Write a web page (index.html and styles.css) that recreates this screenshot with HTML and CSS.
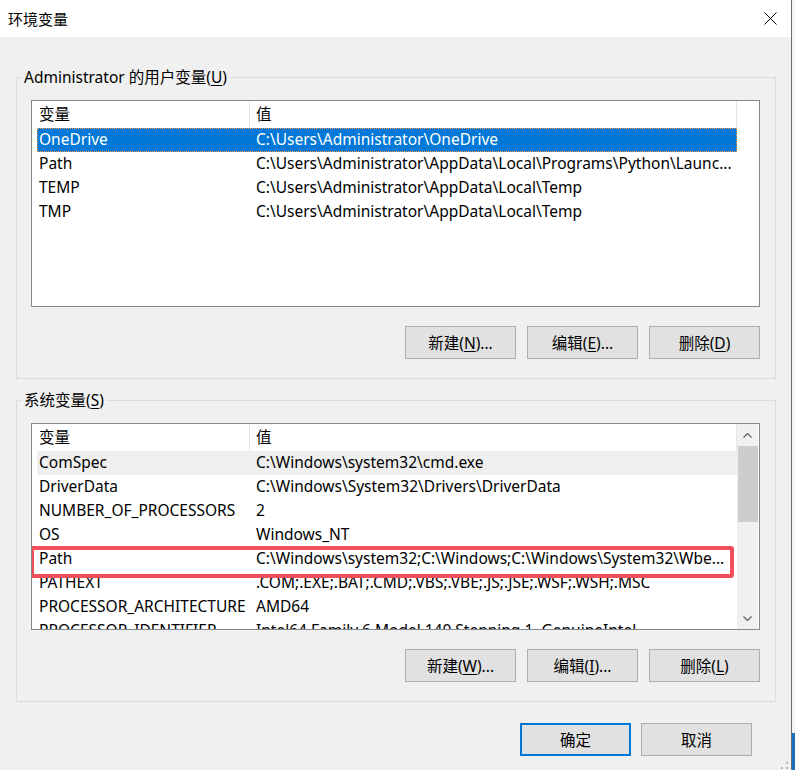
FILE: index.html
```html
<!DOCTYPE html>
<html lang="zh-CN">
<head>
<meta charset="utf-8">
<title>环境变量</title>
<link rel="stylesheet" href="styles.css">
</head>
<body>
<div class="window">
  <div class="titlebar">
    <span class="title">环境变量</span>
    <span class="close">
      <svg width="13" height="13" viewBox="0 0 13 13"><path d="M0.5 0.5 L12.5 12.5 M12.5 0.5 L0.5 12.5" stroke="#000" stroke-width="1" fill="none"/></svg>
    </span>
  </div>
  <div class="content">
    <fieldset class="group">
      <legend>Administrator 的用户变量(<u>U</u>)</legend>
      <div class="list">
        <div class="table">
          <div class="row head"><span class="name">变量</span><span class="val">值</span></div>
          <div class="row selected"><span class="name">OneDrive</span><span class="val">C:\Users\Administrator\OneDrive</span></div>
          <div class="row"><span class="name">Path</span><span class="val">C:\Users\Administrator\AppData\Local\Programs\Python\Launc...</span></div>
          <div class="row"><span class="name">TEMP</span><span class="val">C:\Users\Administrator\AppData\Local\Temp</span></div>
          <div class="row"><span class="name">TMP</span><span class="val">C:\Users\Administrator\AppData\Local\Temp</span></div>
        </div>
      </div>
      <div class="btns">
        <button class="btn">新建(<u>N</u>)...</button>
        <button class="btn">编辑(<u>E</u>)...</button>
        <button class="btn">删除(<u>D</u>)</button>
      </div>
    </fieldset>

    <fieldset class="group second">
      <legend>系统变量(<u>S</u>)</legend>
      <div class="list">
        <div class="table">
          <div class="row head"><span class="name">变量</span><span class="val">值</span></div>
          <div class="row hover"><span class="name">ComSpec</span><span class="val">C:\Windows\system32\cmd.exe</span></div>
          <div class="row"><span class="name">DriverData</span><span class="val">C:\Windows\System32\Drivers\DriverData</span></div>
          <div class="row"><span class="name">NUMBER_OF_PROCESSORS</span><span class="val">2</span></div>
          <div class="row"><span class="name">OS</span><span class="val">Windows_NT</span></div>
          <div class="row"><span class="name">Path</span><span class="val">C:\Windows\system32;C:\Windows;C:\Windows\System32\Wbe...</span></div>
          <div class="row"><span class="name">PATHEXT</span><span class="val">.COM;.EXE;.BAT;.CMD;.VBS;.VBE;.JS;.JSE;.WSF;.WSH;.MSC</span></div>
          <div class="row"><span class="name">PROCESSOR_ARCHITECTURE</span><span class="val">AMD64</span></div>
          <div class="row"><span class="name">PROCESSOR_IDENTIFIER</span><span class="val">Intel64 Family 6 Model 140 Stepping 1, GenuineIntel</span></div>
        </div>
        <div class="scrollbar">
          <span class="arrow">
            <svg width="9" height="5" viewBox="0 0 9 5"><polyline points="0.5,4.5 4.5,0.5 8.5,4.5" fill="none" stroke="#606060" stroke-width="1.2"/></svg>
          </span>
          <span class="thumb"></span>
          <span class="track"></span>
          <span class="arrow">
            <svg width="9" height="5" viewBox="0 0 9 5"><polyline points="0.5,0.5 4.5,4.5 8.5,0.5" fill="none" stroke="#606060" stroke-width="1.2"/></svg>
          </span>
        </div>
        <div class="mark"></div>
      </div>
      <div class="btns">
        <button class="btn">新建(<u>W</u>)...</button>
        <button class="btn">编辑(<u>I</u>)...</button>
        <button class="btn">删除(<u>L</u>)</button>
      </div>
    </fieldset>

    <div class="footer">
      <button class="btn default">确定</button>
      <button class="btn">取消</button>
    </div>
  </div>
  <svg class="grip" width="10" height="10" viewBox="0 0 10 10">
    <rect x="7" y="2" width="2" height="2" fill="#b8b8b8"/>
    <rect x="2" y="7" width="2" height="2" fill="#b8b8b8"/>
    <rect x="7" y="7" width="2" height="2" fill="#b8b8b8"/>
  </svg>
</div>
<div class="desktop"></div>
</body>
</html>
```

FILE: styles.css
```css
* {
  box-sizing: border-box;
}

body {
  margin: 0;
  background: #f3f3f3;
  font-family: "Noto Sans", "Noto Sans CJK SC", sans-serif;
  font-size: 15.5px;
  color: #000;
  display: flex;
}

.window {
  position: relative;
  width: 792px;
  height: 770px;
  background: #f0f0f0;
  border-right: 1px solid #6d6d6d;
  display: flex;
  flex-direction: column;
  flex-shrink: 0;
}

.desktop {
  flex: 1;
  height: 770px;
  background: linear-gradient(#f3f3f3 0, #f3f3f3 733px, #1a6fc0 733px);
}

.titlebar {
  height: 37px;
  background: #fff;
  display: flex;
  align-items: center;
  justify-content: space-between;
  padding-left: 8px;
}

.title {
  font-size: 15px;
  line-height: 20px;
}

.close {
  width: 42px;
  height: 37px;
  display: flex;
  align-items: center;
  justify-content: center;
}

.content {
  padding: 30px 15px 0 16px;
}

.group {
  margin: 0;
  padding: 13px 0 19px 0;
  border: 1px solid #dcdcdc;
  width: 760px;
  min-width: 0;
}

.group.second {
  margin-top: 11px;
}

.group legend {
  margin-left: 4px;
  padding: 0 3px;
  line-height: 20px;
}

u {
  text-decoration: underline;
  text-underline-offset: 2px;
}

.list {
  position: relative;
  height: 207px;
  margin: 0 15px 0 14px;
  border: 1px solid #828790;
  background: #fff;
  display: flex;
  overflow: hidden;
}

.table {
  flex: 1;
  padding-left: 5px;
  overflow: hidden;
}

.row {
  display: flex;
  width: 700px;
  height: 24px;
  line-height: 23px;
  white-space: nowrap;
}

.row .name {
  width: 213px;
  padding-left: 2px;
  overflow: hidden;
  flex-shrink: 0;
}

.row .val {
  width: 487px;
  padding-left: 6px;
  overflow: hidden;
  flex-shrink: 0;
}

.row.head {
  height: 27px;
  line-height: 27px;
}

.row.head .name,
.row.head .val {
  border-right: 1px solid #e5e5e5;
}

.row.selected {
  background: #0078d7;
  color: #fff;
  outline: 1px dotted #f59a4a;
  outline-offset: -1px;
}

.row.hover {
  background: #efefef;
}

.scrollbar {
  width: 21px;
  margin-right: 1px;
  background: #f0f0f0;
  display: flex;
  flex-direction: column;
  flex-shrink: 0;
}

.scrollbar .arrow {
  height: 22px;
  display: flex;
  align-items: center;
  justify-content: center;
}

.scrollbar .thumb {
  height: 76px;
  margin-left: 1px;
  background: #cdcdcd;
}

.scrollbar .track {
  flex: 1;
}

.mark {
  position: absolute;
  left: -2px;
  top: 122px;
  width: 704px;
  height: 32px;
  border: 4px solid #f0505a;
  border-radius: 3px;
}

.btns {
  display: flex;
  justify-content: flex-end;
  gap: 11px;
  margin: 19px 15px 0 0;
}

.btn {
  width: 111px;
  height: 33px;
  padding: 0;
  background: #e1e1e1;
  border: 1px solid #adadad;
  font: inherit;
  color: #000;
}

.btn.default {
  border: 2px solid #0078d7;
}

.footer {
  display: flex;
  justify-content: flex-end;
  gap: 10px;
  padding: 21px 24px 0 0;
}

.grip {
  position: absolute;
  right: 2px;
  bottom: 0;
}
```
